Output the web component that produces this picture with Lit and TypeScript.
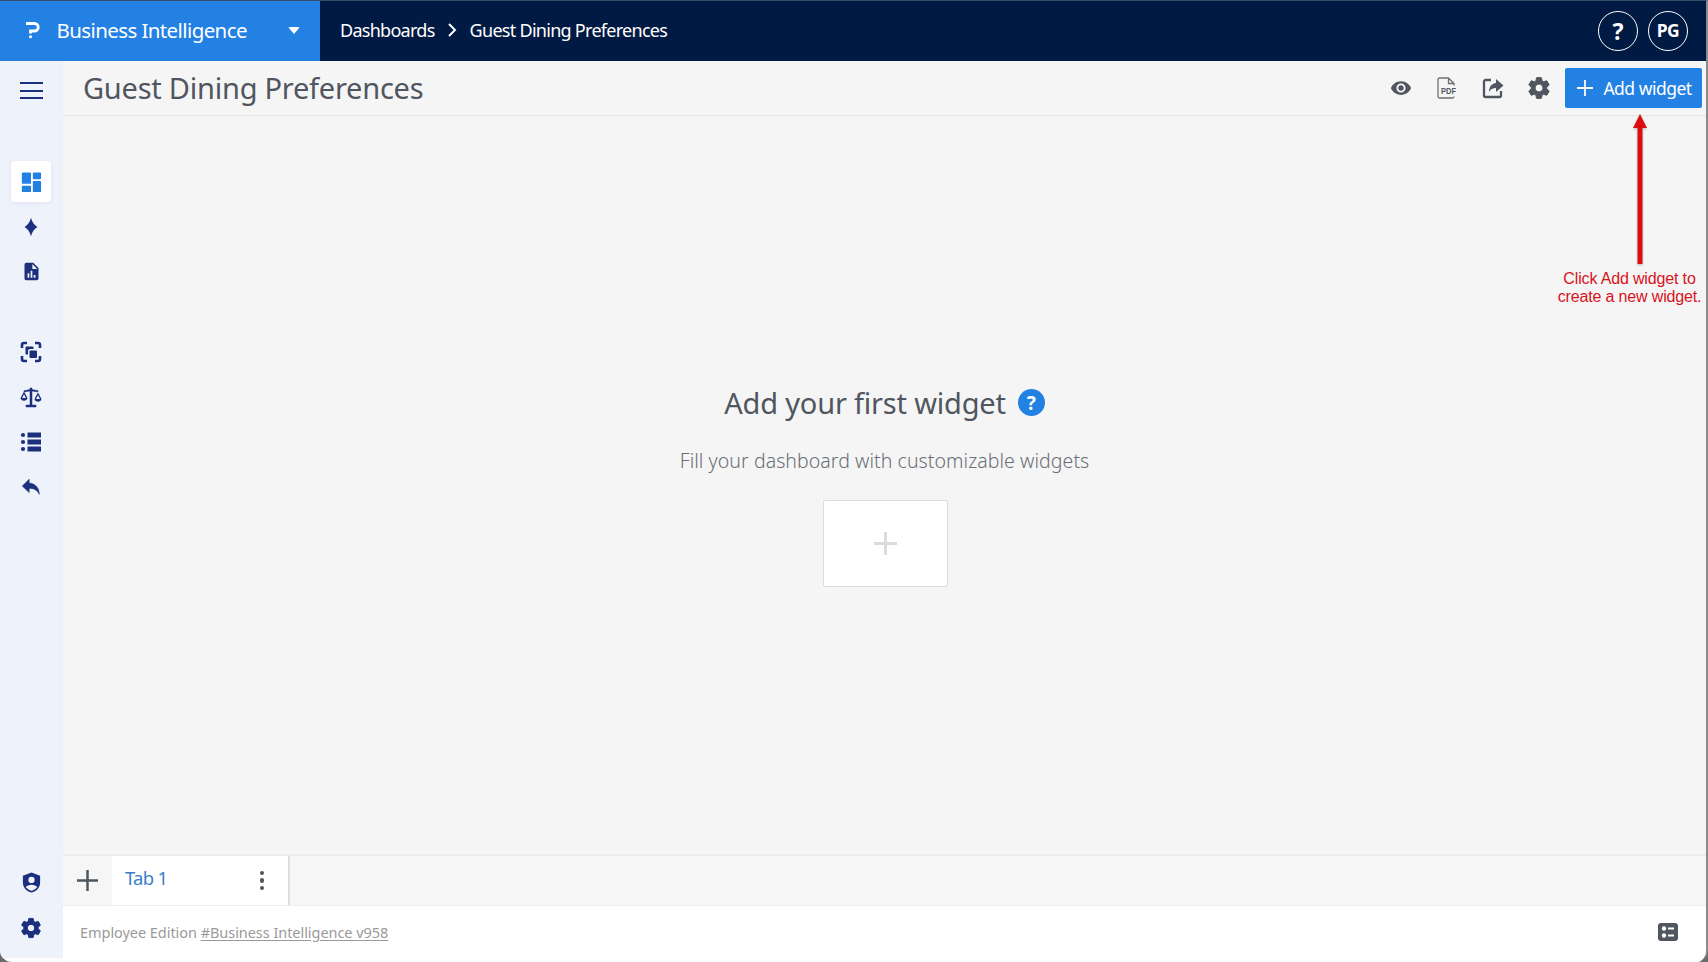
import { LitElement, html, css, svg } from "lit";
import { customElement } from "lit/decorators.js";

const GEAR = "M19.14 12.94c.04-.3.06-.61.06-.94 0-.32-.02-.64-.07-.94l2.03-1.58c.18-.14.23-.41.12-.61l-1.92-3.32c-.12-.22-.37-.29-.59-.22l-2.39.96c-.5-.38-1.03-.7-1.62-.94l-.36-2.54c-.04-.24-.24-.41-.48-.41h-3.84c-.24 0-.43.17-.47.41l-.36 2.54c-.59.24-1.13.57-1.62.94l-2.39-.96c-.22-.08-.47 0-.59.22L2.74 8.87c-.12.21-.08.47.12.61l2.03 1.58c-.05.3-.09.63-.09.94s.02.64.07.94l-2.03 1.58c-.18.14-.23.41-.12.61l1.92 3.32c.12.22.37.29.59.22l2.39-.96c.5.38 1.03.7 1.62.94l.36 2.54c.05.24.24.41.48.41h3.84c.24 0 .44-.17.47-.41l.36-2.54c.59-.24 1.13-.56 1.62-.94l2.39.96c.22.08.47 0 .59-.22l1.92-3.32c.12-.22.07-.47-.12-.61l-2.01-1.58zM12 15.6c-1.98 0-3.6-1.62-3.6-3.6s1.62-3.6 3.6-3.6 3.6 1.62 3.6 3.6-1.62 3.6-3.6 3.6z";

const ic = (size: number, body: unknown) => html`<svg width=${size} height=${size} viewBox="0 0 24 24" fill="currentColor">${body}</svg>`;

const sideIcons = {
  dash: svg`<path d="M2 2.500a1 1 0 0 1 1-1h8a1 1 0 0 1 1 1V13a1 1 0 0 1-1 1H3a1 1 0 0 1-1-1zM2 17a1 1 0 0 1 1-1h8a1 1 0 0 1 1 1v5a1 1 0 0 1-1 1H3a1 1 0 0 1-1-1zM14 2.500a1 1 0 0 1 1-1h7a1 1 0 0 1 1 1V8a1 1 0 0 1-1 1h-7a1 1 0 0 1-1-1zM14 12a1 1 0 0 1 1-1h7a1 1 0 0 1 1 1v10a1 1 0 0 1-1 1h-7a1 1 0 0 1-1-1z"/>`,
  diamond: svg`<path d="M12 2c1.200 4.600 3.400 7.800 7 10-3.600 2.200-5.800 5.400-7 10-1.200-4.600-3.400-7.800-7-10 3.600-2.200 5.800-5.400 7-10z"/>`,
  report: svg`<path fill-rule="evenodd" d="M6 2h8l6 6v12a2 2 0 0 1-2 2H6a2 2 0 0 1-2-2V4a2 2 0 0 1 2-2zm7 1.500V9h5.500zM7.500 14v5h2v-5zm3.500-3v8h2v-8zm3.500 5v3h2v-3z"/>`,
  focus: svg`<path fill="none" stroke="currentColor" stroke-width="2.600" d="M8 3H5a2 2 0 0 0-2 2v3M16 3h3a2 2 0 0 1 2 2v3M8 21H5a2 2 0 0 1-2-2v-3M16 21h3a2 2 0 0 0 2-2v-3"/><path d="M6.500 7.500a1 1 0 0 1 1-1h6a1 1 0 0 1 1 1V9h-3.500a2 2 0 0 0-2 2v3.500H7.500a1 1 0 0 1-1-1z"/><rect x="10.500" y="10.500" width="7.500" height="7.500" rx="1"/>`,
  scale: svg`<path stroke="currentColor" stroke-width=".5" d="M11 3h2v1.500l6 1.200v1.300l-6-1V20h4v2H7v-2h4V6l-6 1V5.700l6-1.200z"/><path fill-rule="evenodd" d="M5 6.500 8.500 13a3.600 3.600 0 0 1-7 0zM3 13h4L5 9.300zM19 7.500l3.500 6.500a3.600 3.600 0 0 1-7 0zM17 14h4l-2-3.700z"/>`,
  list: svg`<circle cx="4" cy="5" r="2.100"/><circle cx="4" cy="12" r="2.100"/><circle cx="4" cy="19" r="2.100"/><rect x="8.500" y="2.500" width="13.500" height="5"/><rect x="8.500" y="9.500" width="13.500" height="5"/><rect x="8.500" y="16.500" width="13.500" height="5"/>`,
  reply: svg`<path stroke="currentColor" stroke-width=".6" d="M10 7.500V3.500L2.500 11 10 18v-4.500c5 0 8.500 1.200 11 6.500 0-6.500-3.500-11.500-11-12.500z"/>`,
  shield: svg`<path fill-rule="evenodd" d="M12 1.500 21 5v7c0 5-3.800 9.300-9 10.500C6.800 21.300 3 17 3 12V5zM12 6a3.300 3.300 0 1 0 0 6.600A3.300 3.300 0 0 0 12 6zm0 8.300c-2.400 0-4.600 1-6 2.400 1.300 1.900 3.400 3.300 6 3.900 2.600-.6 4.700-2 6-3.900-1.400-1.400-3.600-2.400-6-2.400z"/>`,
  gear: svg`<path stroke="currentColor" stroke-width=".9" d=${GEAR}/>`,
};

@customElement("app-root")
export class AppRoot extends LitElement {
  static styles = css`
    :host { display: block; width: 1708px; height: 962px; background: #6b6b6b; font-family: "Noto Sans", "Open Sans", sans-serif; }
    .frame { position: relative; height: 100%; box-sizing: border-box; display: flex; flex-direction: column; overflow: hidden; background: #fff;
      border-top: 1px solid #3a4d68; border-right: 2px solid #8a8a8a; border-radius: 0 0 12px 12px; }
    .top { flex: 0 0 60px; display: flex; align-items: center; background: #011a43; color: #fff; }
    .brand { width: 320px; height: 100%; box-sizing: border-box; background: #2481e4; display: flex; align-items: center; padding: 0 0 2px 26px; font-size: 20.500px; flex: none; letter-spacing: -0.6px; }
    .brand .name { margin-left: 16.500px; }
    .brand .caret { margin-left: auto; margin-right: 20px; width: 0; height: 0; border-left: 6.500px solid transparent; border-right: 6.500px solid transparent; border-top: 7px solid #fff; border-radius: 2px; }
    .crumbs { display: flex; align-items: center; padding: 0 0 2px 20px; font-size: 18px; letter-spacing: -0.72px; }
    .crumbs svg { margin: 0 13px 0 12px; }
    .top-right { margin-left: auto; margin-right: 18px; display: flex; gap: 10px; }
    .circle { width: 38px; height: 38px; border: 1px solid #fff; border-radius: 50%; display: flex; align-items: center; justify-content: center; font-weight: 700; }
    .circle.q { font-size: 23px; }
    .circle.pg { font-size: 17.500px; padding-bottom: 3px; height: 35px; letter-spacing: -0.5px; }
    .body { flex: 1; display: flex; min-height: 0; }
    .side { flex: 0 0 63px; box-sizing: border-box; padding: 7px 1px 8px 0; margin-bottom: 4px; background: #eef2fb; color: #1c2f7c; display: flex; flex-direction: column; align-items: center; box-shadow: 1px 0 4px rgba(0,0,0,.04); }
    .sitem { width: 40px; height: 45px; display: flex; align-items: center; justify-content: center; flex: none; }
    .sitem.active { height: 41px; margin: 2px 0; background: #fff; border-radius: 4px; color: #2481e4; box-shadow: 0 1px 4px rgba(40,60,120,.08); }
    .burger { width: 23px; height: 17px; display: flex; flex-direction: column; justify-content: space-between; }
    .burger i { display: block; height: 2px; background: #1c2f7c; }
    .g1 { margin-top: 46px; }
    .g2 { margin-top: 35px; }
    .g3 { margin-top: auto; }
    .main { flex: 1; display: flex; flex-direction: column; min-width: 0; background: #f5f5f5; }
    .head { flex: 0 0 55px; box-sizing: border-box; border-bottom: 1px solid #e4e4e4; display: flex; align-items: center; padding: 0 4px 0 20px; }
    .head h1 { margin: 0 0 2px; font-weight: 400; font-size: 29px; letter-spacing: -0.24px; color: #50565f; }
    .tools { margin-left: auto; display: flex; align-items: center; color: #50565f; }
    .tool { width: 46px; display: flex; justify-content: center; }
    .add { margin-left: 3px; width: 137px; height: 40px; box-sizing: border-box; padding-left: 2px; background: #2481e4; color: #fff; border-radius: 2px; display: flex; align-items: center; justify-content: center; gap: 10px; font-size: 17.500px; letter-spacing: -0.5px; }
    .canvas { flex: 1; display: flex; flex-direction: column; align-items: center; justify-content: center; }
    .title { display: flex; align-items: center; gap: 12px; font-size: 29px; color: #50565f; letter-spacing: -0.2px; }
    .help { width: 27px; height: 27px; border-radius: 50%; background: #2481e4; color: #fff; font-size: 19px; font-weight: 700; display: flex; align-items: center; justify-content: center; }
    .sub { margin-top: 25px; font-size: 19.500px; color: #6a6f76; font-weight: 300; letter-spacing: 0.06px; }
    .box { margin: 26px 0 0 2px; width: 125px; height: 87px; box-sizing: border-box; background: #fff; border: 1px solid #dcdcdc; border-radius: 2px; display: flex; align-items: center; justify-content: center; }
    .tabs { flex: 0 0 52px; box-sizing: border-box; border-top: 2px solid #ececec; border-bottom: 1px solid #ededed; display: flex; background: #f6f6f6; }
    .tadd { width: 49px; display: flex; align-items: center; justify-content: center; color: #50565f; }
    .tab { width: 178px; box-sizing: border-box; background: #fff; border-right: 2px solid #dedede; display: flex; align-items: center; justify-content: space-between; padding: 0 24px 0 13px; }
    .tab span { color: #3a7fc9; font-size: 18.500px; letter-spacing: -0.7px; margin-bottom: 7px; }
    .dots { display: flex; flex-direction: column; gap: 3px; }
    .dots i { width: 4.500px; height: 4.500px; border-radius: 50%; background: #50565f; }
    .foot { flex: 0 0 56px; box-sizing: border-box; background: #fff; display: flex; align-items: center; justify-content: space-between; padding: 0 28px 4px 17px; font-size: 14.500px; color: #9a9a9a; letter-spacing: -0.05px; }
    .foot u { text-underline-offset: 2px; }
    .grid { width: 20px; height: 18px; background: #50565f; border-radius: 3px; display: block; }
    .pdf { overflow: visible; }
    .note { position: absolute; left: 1558px; top: 113px; width: 143px; display: flex; flex-direction: column; align-items: center; font-family: "Liberation Sans", Arial, sans-serif; font-size: 16px; line-height: 18px; color: #d8131b; text-align: center; letter-spacing: -0.15px; white-space: nowrap; }
    .note svg { display: block; margin: 0 0 6px 21px; filter: drop-shadow(0 1px 1px rgba(0,0,0,.25)); }
  `;

  private side(body: unknown, size: number, cls = "") {
    return html`<div class="sitem ${cls}">${ic(size, body)}</div>`;
  }

  render() {
    return html`<div class="frame">
      <div class="top">
        <div class="brand">
          <svg width="14" height="18" viewBox="0 0 14 18" fill="none" stroke="#fff" stroke-width="2.800"><path d="M0 2.500h8.500a3.700 3.700 0 0 1 0 7.500H4.500v2.500"/><circle cx="4.500" cy="15.800" r="1.500" fill="#fff" stroke="none"/></svg>
          <span class="name">Business Intelligence</span><i class="caret"></i>
        </div>
        <div class="crumbs">Dashboards
          <svg width="10" height="16" viewBox="0 0 10 16" fill="none" stroke="#fff" stroke-width="2"><path d="M2 2l6 6-6 6"/></svg>
          Guest Dining Preferences</div>
        <div class="top-right"><div class="circle q">?</div><div class="circle pg">PG</div></div>
      </div>
      <div class="body">
        <div class="side">
          <div class="sitem"><div class="burger"><i></i><i></i><i></i></div></div>
          <div class="g1"></div>
          ${this.side(sideIcons.dash, 22, "active")}
          ${this.side(sideIcons.diamond, 22)}
          ${this.side(sideIcons.report, 21)}
          <div class="g2"></div>
          ${this.side(sideIcons.focus, 24)}
          ${this.side(sideIcons.scale, 24)}
          ${this.side(sideIcons.list, 24)}
          ${this.side(sideIcons.reply, 22)}
          <div class="g3"></div>
          ${this.side(sideIcons.shield, 23)}
          ${this.side(sideIcons.gear, 24)}
        </div>
        <div class="main">
          <div class="head">
            <h1>Guest Dining Preferences</h1>
            <div class="tools">
              <div class="tool">${ic(22, svg`<path d="M12 4.500C7 4.500 2.730 7.610 1 12c1.730 4.390 6 7.500 11 7.500s9.270-3.110 11-7.500c-1.730-4.390-6-7.500-11-7.500zM12 17c-2.760 0-5-2.240-5-5s2.240-5 5-5 5 2.240 5 5-2.240 5-5 5zm0-8c-1.660 0-3 1.340-3 3s1.340 3 3 3 3-1.340 3-3-1.340-3-3-3z"/>`)}</div>
              <div class="tool"><svg class="pdf" width="24" height="24" viewBox="0 0 24 24" fill="none" stroke="#6a6f76" stroke-width="1.300"><path d="M19 9.500v-2L13.500 2h-9A1.500 1.500 0 0 0 3 3.500v17A1.500 1.500 0 0 0 4.500 22h13a1.500 1.500 0 0 0 1.500-1.500M13.500 2v5.500H19"/><text x="6" y="18" font-size="9.500" font-weight="700" fill="#50565f" stroke="none" textLength="15" lengthAdjust="spacingAndGlyphs" font-family="Liberation Sans, sans-serif">PDF</text></svg></div>
              <div class="tool"><svg width="24" height="24" viewBox="0 0 24 24"><path fill="none" stroke="#50565f" stroke-width="2.300" d="M10 4H4.500A1.500 1.500 0 0 0 3 5.500v14A1.500 1.500 0 0 0 4.500 21h14a1.500 1.500 0 0 0 1.500-1.500V15"/><path fill="#50565f" d="M15 3l7.500 6.500L15 16v-4c-3 0-5.500 1-7 4 0-5 2.500-8.500 7-9z"/></svg></div>
              <div class="tool">${ic(26, svg`<path stroke="currentColor" stroke-width=".9" d=${GEAR}/>`)}</div>
              <div class="add"><svg width="16" height="16" viewBox="0 0 16 16" stroke="#fff" stroke-width="1.800"><path d="M8 0v16M0 8h16"/></svg>Add widget</div>
            </div>
          </div>
          <div class="canvas">
            <div class="title">Add your first widget<span class="help">?</span></div>
            <div class="sub">Fill your dashboard with customizable widgets</div>
            <div class="box"><svg width="23" height="23" viewBox="0 0 23 23" stroke="#dcdcdc" stroke-width="3"><path d="M11.500 0v23M0 11.500h23"/></svg></div>
          </div>
          <div class="tabs">
            <div class="tadd"><svg width="21" height="21" viewBox="0 0 21 21" stroke="#50565f" stroke-width="2.500"><path d="M10.500 0v21M0 10.500h21"/></svg></div>
            <div class="tab"><span>Tab 1</span><div class="dots"><i></i><i></i><i></i></div></div>
          </div>
          <div class="foot">
            <div>Employee Edition <u>#Business Intelligence v958</u></div>
            <svg class="grid" viewBox="0 0 20 18"><g fill="#fff"><circle cx="6" cy="5.500" r="2.200"/><circle cx="6" cy="12.500" r="2.200"/><rect x="10" y="4.500" width="6" height="2"/><rect x="10" y="11.500" width="6" height="2"/></g></svg>
          </div>
        </div>
      </div>
      <div class="note">
        <svg width="16" height="150" viewBox="0 0 16 150"><path fill="#dc0d0d" d="M8 0l7 14h-4.500v136h-5V14H1z"/></svg>
        <div>Click Add widget to<br>create a new widget.</div>
      </div>
    </div>`;
  }
}
